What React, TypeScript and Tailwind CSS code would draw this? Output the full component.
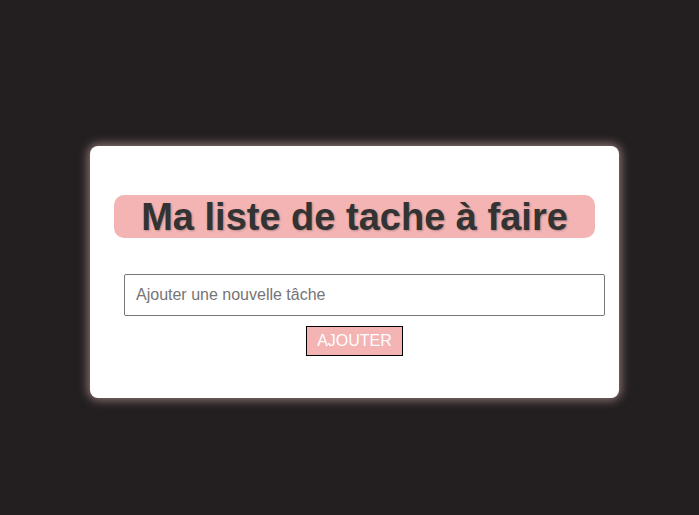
import React, { useState } from 'react';

const App: React.FC = () => {
  const [task, setTask] = useState('');

  return (
    <div
      className="min-h-[515px] w-full bg-[#231f20] flex justify-center pt-[146px] pl-[10px]"
      style={{ fontFamily: '"Liberation Sans", Arial, sans-serif' }}
    >
      <div className="w-[529px] h-[252px] bg-white rounded-lg px-6 pt-[49px] shadow-[0_0_10px_2px_rgba(255,210,205,0.5)]">
        <h1 className="h-[43px] bg-[#f4b4b4] rounded-[10px] flex items-center justify-center text-[38px] font-bold leading-none text-[#333333] [text-shadow:1px_1px_2px_rgba(0,0,0,0.25)]">
          Ma liste de tache à faire
        </h1>
        <div className="mt-9 flex flex-col items-center">
          <input
            value={task}
            onChange={(e) => setTask(e.target.value)}
            placeholder="Ajouter une nouvelle tâche"
            className="ml-5 w-[481px] h-[42px] border border-[#767676] rounded-[2px] px-[11px] text-[16px] text-[#333] placeholder:text-[#757575] outline-none"
          />
          <button className="mt-[10px] h-[30px] px-[10px] bg-[#f4b4b4] border border-black text-white text-[16px] leading-none">
            AJOUTER
          </button>
        </div>
      </div>
    </div>
  );
};

export default App;
